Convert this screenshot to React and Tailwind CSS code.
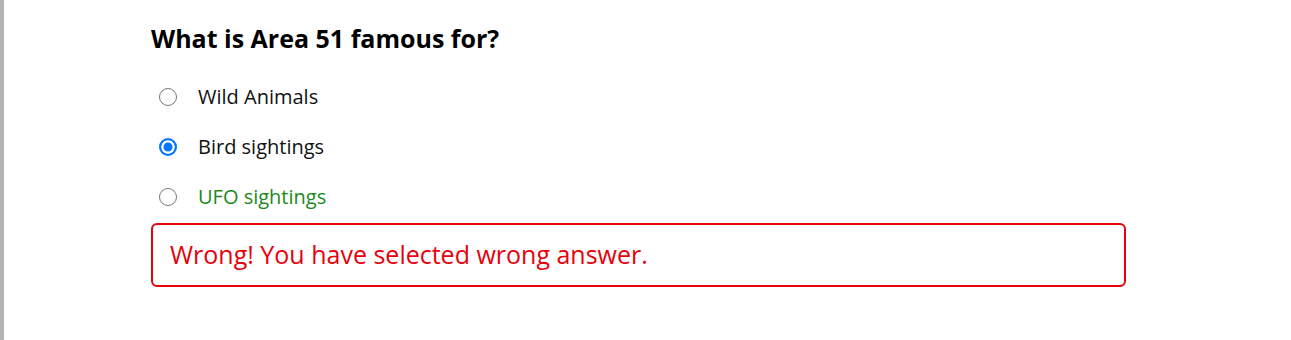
import { useState } from "react";

const options = ["Wild Animals", "Bird sightings", "UFO sightings"];

export default function App() {
	const [picked, setPicked] = useState("Bird sightings");

	return (
		<div className="flex min-h-[340px] bg-white font-['Open_Sans',sans-serif]">
			<div className="w-[4px] bg-[#b4b4b4]" />
			<div className="ml-[147px] w-[975px] pt-[23px]">
				<h3 className="text-[25px] font-bold leading-[30px] text-black">
					What is Area 51 famous for?
				</h3>
				<div className="mt-[30px] flex flex-col gap-[22px]">
					{options.map((o) => (
						<label
							key={o}
							className={
								"flex h-[28px] items-center text-[20px] " +
								(o === "UFO sightings" ? "text-[#1a8a1a]" : "text-[#111]")
							}
						>
							<input
								type="radio"
								name="q"
								checked={picked === o}
								onChange={() => setPicked(o)}
								className="ml-[8px] mr-[21px] size-[18px] shrink-0 appearance-none rounded-full border-[1.5px] border-[#767676] bg-white checked:border-2 checked:border-[#0075ff] checked:bg-[#0075ff] checked:shadow-[inset_0_0_0_2.5px_white]"
							/>
							{o}
						</label>
					))}
				</div>
				<div className="mt-[12px] flex h-[64px] items-center rounded-[6px] border-[2.5px] border-[#e8000b] px-[17px] text-[25px] text-[#e8000b]">
					Wrong! You have selected wrong answer.
				</div>
			</div>
		</div>
	);
}
